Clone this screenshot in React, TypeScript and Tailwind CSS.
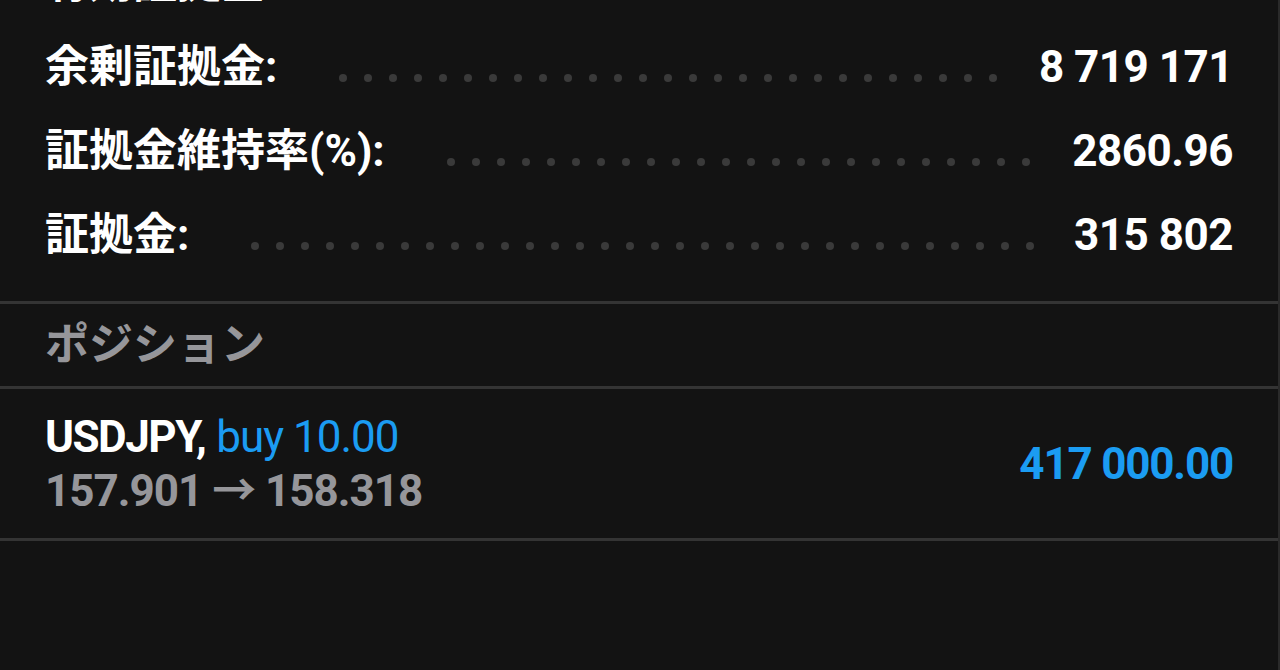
const font = "font-['Roboto','Noto_Sans_CJK_JP',sans-serif]";

type Row = { label: string; value: string };

const rows: Row[] = [
  { label: "有効証拠金:", value: "9 034 973" },
  { label: "余剰証拠金:", value: "8 719 171" },
  { label: "証拠金維持率(%):", value: "2860.96" },
  { label: "証拠金:", value: "315 802" },
];

function Dots() {
  return (
    <div className="flex-1 ml-[62px] mr-[30px] mt-[22px] h-2 flex flex-wrap gap-x-[17px] overflow-hidden">
      {Array.from({ length: 60 }).map((_, i) => (
        <span key={i} className="w-2 h-2 rounded-full bg-[#3a3a3a]" />
      ))}
    </div>
  );
}

function Divider() {
  return <div className="h-[3px] bg-[#343434]" />;
}

export default function App() {
  return (
    <div className={`h-[670px] w-full overflow-hidden bg-[#131313] border-r-2 border-[#2a2a2a] ${font}`}>
      <div className="-mt-[59px] pb-[24px] px-[45px]">
        {rows.map((r) => (
          <div key={r.label} className="h-[84px] flex items-center">
            <span className="text-[44px] leading-none font-bold text-white">{r.label}</span>
            <Dots />
            <span className="text-[44px] leading-none font-bold text-white tracking-[-0.5px]">{r.value}</span>
          </div>
        ))}
      </div>

      <Divider />
      <div className="h-[82px] flex items-center px-[45px]">
        <span className="text-[44px] leading-none font-bold text-[#96969a]">ポジション</span>
      </div>
      <Divider />

      <div className="h-[149px] flex items-center justify-between px-[45px]">
        <div className="flex flex-col">
          <div className="text-[44px] leading-[54px] whitespace-nowrap">
            <span className="font-bold text-white tracking-[-1.5px]">USDJPY,</span>{" "}
            <span className="text-[#1b9cf2] tracking-[-1px]">buy 10.00</span>
          </div>
          <div className="text-[44px] leading-[54px] font-bold text-[#96969a] whitespace-nowrap tracking-[-1px]">
            157.901 → 158.318
          </div>
        </div>
        <span className="text-[44px] leading-none font-bold text-[#1b9cf2] tracking-[-1.2px]">417 000.00</span>
      </div>
      <Divider />
    </div>
  );
}
